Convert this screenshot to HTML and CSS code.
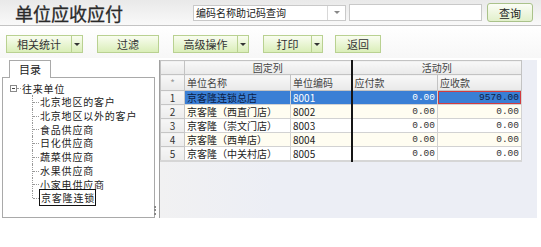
FILE: index.html
```html
<!DOCTYPE html>
<html>
<head>
<title>单位应收应付</title>
<link rel="stylesheet" href="styles.css">
</head>
<body>
<div class="topbar">
<h1 class="title">单位应收应付</h1>
<div class="search">
<div class="select">
<span class="select-text">编码名称助记码查询</span>
<span class="select-arrow"><i class="tri"></i></span>
</div>
<input type="text" class="search-input">
<button class="query">查询</button>
</div>
</div>

<div class="toolbar">
<div class="split w-stat"><button class="tb-main">相关统计</button><button class="tb-drop"><i class="tri"></i></button></div>
<button class="tb-btn w-filter">过滤</button>
<div class="split w-adv"><button class="tb-main">高级操作</button><button class="tb-drop"><i class="tri"></i></button></div>
<div class="split w-print"><button class="tb-main">打印</button><button class="tb-drop"><i class="tri"></i></button></div>
<button class="tb-btn w-back">返回</button>
</div>

<div class="workspace">
<div class="side">
<div class="tabs"><span class="tab">目录</span></div>
<div class="tree-box">
<div class="tree-root"><span class="toggle"></span><span class="root-line"></span><span class="node">往来单位</span></div>
<ul class="tree-children">
<li><span class="node">北京地区的客户</span></li>
<li><span class="node">北京地区以外的客户</span></li>
<li><span class="node">食品供应商</span></li>
<li><span class="node">日化供应商</span></li>
<li><span class="node">蔬菜供应商</span></li>
<li><span class="node">水果供应商</span></li>
<li><span class="node">小家电供应商</span></li>
<li><span class="node focused">京客隆连锁</span></li>
</ul>
<span class="grip"></span>
</div>
</div>

<div class="grid-panel">
<table class="grid">
<colgroup>
<col class="c-no"><col class="c-name"><col class="c-code"><col class="c-pay"><col class="c-recv">
</colgroup>
<thead>
<tr class="band">
<th class="no"></th>
<th colspan="2" class="fixed-end">固定列</th>
<th colspan="2">活动列</th>
</tr>
<tr class="heads">
<th class="no star">*</th>
<th>单位名称</th>
<th class="fixed-end">单位编码</th>
<th>应付款</th>
<th>应收款</th>
</tr>
</thead>
<tbody>
<tr class="selected">
<td class="no">1</td><td class="name">京客隆连锁总店</td><td class="code fixed-end">8001</td><td class="num">0.00</td><td class="num current">9570.00</td>
</tr>
<tr>
<td class="no">2</td><td class="name">京客隆（西直门店）</td><td class="code fixed-end">8002</td><td class="num">0.00</td><td class="num">0.00</td>
</tr>
<tr>
<td class="no">3</td><td class="name">京客隆（崇文门店）</td><td class="code fixed-end">8003</td><td class="num">0.00</td><td class="num">0.00</td>
</tr>
<tr>
<td class="no">4</td><td class="name">京客隆（西单店）</td><td class="code fixed-end">8004</td><td class="num">0.00</td><td class="num">0.00</td>
</tr>
<tr>
<td class="no">5</td><td class="name">京客隆（中关村店）</td><td class="code fixed-end">8005</td><td class="num">0.00</td><td class="num">0.00</td>
</tr>
</tbody>
</table>
</div>
</div>
</body>
</html>
```

FILE: styles.css
```css
body {
	margin: 0;
	width: 541px;
	background-color: #ffffff;
	color: #222;
	font-family: "Noto Sans CJK SC", "Liberation Sans", sans-serif;
}

button {
	font-family: inherit;
	padding: 0;
	cursor: pointer;
}

/* title bar */

.topbar {
	align-items: center;
	background: linear-gradient(#e9e9e9, #f9f9f9);
	border-bottom: 1px solid #c4c4c4;
	display: flex;
	height: 25px;
}

.title {
	color: #2a2a2a;
	font-size: 18px;
	font-weight: 400;
	line-height: 20px;
	margin: 0 0 0 15px;
	-webkit-text-stroke: 0.3px #2a2a2a;
}

.search {
	align-items: center;
	display: flex;
	margin-left: auto;
	margin-right: 8px;
}

.select {
	background-color: #fff;
	border: 1px solid #c9c9c9;
	box-sizing: border-box;
	display: flex;
	height: 16px;
	width: 153px;
}

.select-text {
	flex: 1;
	font-size: 10px;
	line-height: 14px;
	padding-left: 2px;
}

.select-arrow {
	align-items: center;
	border-left: 1px solid #d8d8d8;
	display: flex;
	justify-content: center;
	width: 17px;
}

.select-arrow .tri {
	border-top-color: #888;
}

.tri {
	border-left: 3px solid transparent;
	border-right: 3px solid transparent;
	border-top: 3px solid #333;
	display: block;
	height: 0;
	width: 0;
}

.search-input {
	border: 1px solid #c9c9c9;
	box-sizing: border-box;
	height: 17px;
	margin-left: 3px;
	outline: none;
	padding: 0;
	width: 133px;
}

.query {
	background: linear-gradient(#fbfdf6, #e2f0cb);
	border: 1px solid #aac28a;
	border-radius: 3px;
	color: #222;
	font-size: 11px;
	height: 19px;
	margin-left: 5px;
	width: 46px;
}

/* toolbar */

.toolbar {
	align-items: center;
	background: linear-gradient(#ffffff, #f7f7f7);
	display: flex;
	padding: 9px 0 5px 6px;
}

.split {
	display: flex;
	height: 18px;
}

.tb-main,
.tb-drop,
.tb-btn {
	background: linear-gradient(#f9fdf0, #daeeb8);
	border: 1px solid #b9d191;
	box-sizing: border-box;
	color: #333;
	font-size: 11px;
	height: 18px;
}

.tb-main {
	border-right: none;
	flex: 1;
}

.tb-drop {
	align-items: center;
	display: flex;
	justify-content: center;
	width: 12px;
}

.w-stat { width: 77px; }
.w-filter { margin-left: 14px; width: 62px; }
.w-adv { margin-left: 14px; width: 76px; }
.w-print { margin-left: 14px; width: 60px; }
.w-back { margin-left: 12px; width: 46px; }

/* workspace */

.workspace {
	display: flex;
}

.side {
	display: flex;
	flex-direction: column;
	margin-left: 2px;
	padding-top: 2px;
	width: 153px;
}

.tabs {
	display: flex;
	height: 18px;
	margin-bottom: -1px;
	padding-left: 7px;
}

.tab {
	background-color: #fff;
	border: 1px solid #a9a9a9;
	border-bottom: none;
	font-size: 11px;
	line-height: 17px;
	position: relative;
	text-align: center;
	width: 40px;
	z-index: 1;
}

.tree-box {
	border: 1px solid #a9a9a9;
	box-sizing: border-box;
	font-size: 10px;
	height: 141px;
	letter-spacing: 0.8px;
	padding-top: 4px;
	position: relative;
}

.node {
	line-height: 13.75px;
	white-space: nowrap;
}

.tree-root {
	align-items: center;
	display: flex;
	height: 13px;
	padding-left: 7px;
}

.toggle {
	border: 1px solid #8a8a8a;
	box-sizing: border-box;
	height: 7px;
	position: relative;
	width: 7px;
}

.toggle::after {
	border-top: 1px solid #444;
	content: "";
	left: 1px;
	position: absolute;
	right: 1px;
	top: 2px;
}

.root-line {
	border-top: 1px dotted #999;
	margin-right: 1px;
	width: 4px;
}

.tree-children {
	list-style: none;
	margin: 0 0 0 29px;
	padding: 0;
}

.tree-children li {
	height: 13.75px;
	line-height: 13.75px;
	padding-left: 8px;
	position: relative;
}

.tree-children li::before {
	border-left: 1px dotted #999;
	content: "";
	height: 100%;
	left: 0;
	position: absolute;
	top: 0;
}

.tree-children li:last-child::before {
	height: 50%;
}

.tree-children li::after {
	border-top: 1px dotted #999;
	content: "";
	left: 1px;
	position: absolute;
	top: 50%;
	width: 6px;
}

.focused {
	border: 1px solid #111;
	margin-left: -1px;
	padding: 0 0 0 1px;
}

.grip {
	border-left: 2px dotted #888;
	bottom: 2px;
	height: 9px;
	position: absolute;
	right: -2px;
}

/* grid */

.grid-panel {
	background: linear-gradient(90deg, #f1f1f2, #eceef5 30%);
	border-left: 1px solid #a0a0a0;
	box-sizing: border-box;
	height: 158px;
	margin-left: 4px;
	margin-top: 2px;
	width: 378px;
}

.grid {
	border-collapse: collapse;
	border-bottom: 2px solid #d6d6d6;
	font-size: 10px;
	table-layout: fixed;
	width: 361px;
}

.c-no { width: 24px; }
.c-name { width: 106px; }
.c-code { width: 61px; }
.c-pay { width: 86px; }
.c-recv { width: 84px; }

.grid th {
	background: linear-gradient(#f8f8f8, #e9e9e9);
	border: 1px solid #c3c3c3;
	color: #444;
	font-weight: normal;
	padding: 0 2px;
	text-align: left;
	white-space: nowrap;
}

.band th {
	height: 13px;
	line-height: 13px;
	text-align: center;
}

.heads th {
	height: 15px;
	line-height: 15px;
}

.grid th.star {
	color: #999;
	text-align: center;
}

.grid td {
	border: 1px solid #d2d2d2;
	height: 13px;
	line-height: 13px;
	overflow: hidden;
	padding: 0 2px;
	white-space: nowrap;
}

.grid tbody tr:nth-child(even) td {
	background-color: #fffdf1;
}

.grid tbody tr:nth-child(odd) td {
	background-color: #ffffff;
}

.grid td.no,
.grid tbody tr td.no {
	background: linear-gradient(#f6f6f6, #ececec);
	border-color: #c6c6c6;
	color: #333;
	text-align: center;
}

.grid .fixed-end {
	border-right: 2px solid #151515;
}

.num {
	color: #333;
	font-family: "Liberation Mono", monospace;
	font-size: 9.5px;
	text-align: right;
}

.grid tbody tr.selected td {
	background-color: #3a7fd5;
	color: #fff;
}

.grid tbody tr.selected td.no {
	background: linear-gradient(#f6f6f6, #ececec);
	color: #333;
}

.grid tbody tr.selected td.name {
	color: #0c1d45;
}

.grid tbody tr.selected td.current {
	box-shadow: inset 0 0 0 1px #d23a3f;
	color: #0c1d45;
}
```
